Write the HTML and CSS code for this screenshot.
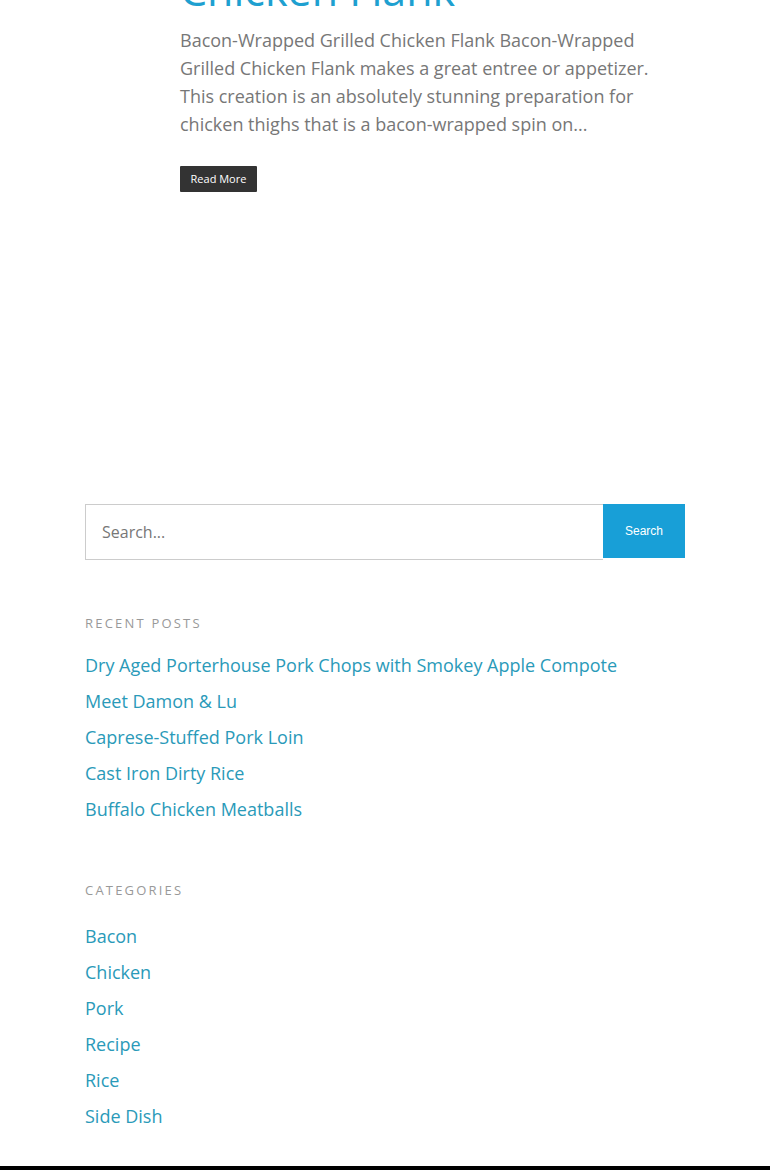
FILE: index.html
```html
<!DOCTYPE html>
<html lang="en">
<head>
<meta charset="utf-8">
<title>Bacon-Wrapped Grilled Chicken Flank</title>
<link rel="stylesheet" href="styles.css">
</head>
<body>
<div class="site">
  <div class="content">
    <article class="post">
      <h2 class="post-title"><a href="#">Chicken Flank</a></h2>
      <p class="post-excerpt">Bacon-Wrapped Grilled Chicken Flank Bacon-Wrapped Grilled Chicken Flank makes a great entree or appetizer. This creation is an absolutely stunning preparation for chicken thighs that is a bacon-wrapped spin on...</p>
      <a class="read-more" href="#">Read More</a>
    </article>

    <aside class="sidebar">
      <form class="search-form">
        <input class="search-field" type="search" placeholder="Search...">
        <button class="search-submit" type="button">Search</button>
      </form>

      <section class="widget widget-recent">
        <h3 class="widget-title">Recent Posts</h3>
        <ul class="widget-list">
          <li><a href="#">Dry Aged Porterhouse Pork Chops with Smokey Apple Compote</a></li>
          <li><a href="#">Meet Damon &amp; Lu</a></li>
          <li><a href="#">Caprese-Stuffed Pork Loin</a></li>
          <li><a href="#">Cast Iron Dirty Rice</a></li>
          <li><a href="#">Buffalo Chicken Meatballs</a></li>
        </ul>
      </section>

      <section class="widget widget-categories">
        <h3 class="widget-title">Categories</h3>
        <ul class="widget-list">
          <li><a href="#">Bacon</a></li>
          <li><a href="#">Chicken</a></li>
          <li><a href="#">Pork</a></li>
          <li><a href="#">Recipe</a></li>
          <li><a href="#">Rice</a></li>
          <li><a href="#">Side Dish</a></li>
        </ul>
      </section>
    </aside>
  </div>
  <footer class="site-footer"></footer>
</div>
</body>
</html>
```
FILE: styles.css
```css
html, body {
  margin: 0;
  padding: 0;
  background: #fff;
}
body {
  font-family: "Open Sans", "Noto Sans", sans-serif;
  color: #777;
}
.site {
  display: flow-root;
}
.content {
  width: 600px;
  margin: 0 auto;
}
.post {
  padding-left: 95px;
}
.post-title {
  margin: -36px 0 10px;
  font-size: 43px;
  line-height: 52px;
  font-weight: 400;
}
.post-title a {
  color: #1ea0d0;
  text-decoration: none;
}
.post-excerpt {
  margin: 0 0 28px;
  font-size: 18px;
  line-height: 28px;
  color: #777;
}
.read-more {
  display: inline-block;
  background: #333;
  color: #fff;
  font-size: 11px;
  line-height: 16px;
  padding: 5px 10px 5px 10px;
  min-width: 57px;
  text-align: center;
  text-decoration: none;
  border-radius: 1px;
}
.sidebar {
  margin-top: 312px;
}
.search-form {
  display: flex;
  align-items: flex-start;
}
.search-field {
  flex: 1;
  box-sizing: border-box;
  height: 56px;
  margin: 0;
  border: 1px solid #ccc;
  border-right: none;
  padding: 0 16px;
  font-family: "Open Sans", sans-serif;
  font-size: 16px;
  color: #777;
  outline: none;
  background: #fff;
}
.search-field::placeholder {
  color: #777;
}
.search-submit {
  width: 82px;
  height: 54px;
  margin: 0;
  border: none;
  background: #189fd7;
  color: #fff;
  font-family: "Liberation Sans", Arial, sans-serif;
  font-size: 12px;
  padding: 0;
}
.widget-recent {
  margin-top: 53px;
}
.widget-categories {
  margin-top: 53px;
}
.widget-title {
  margin: 0;
  font-size: 13px;
  line-height: 20px;
  font-weight: 400;
  letter-spacing: 2.2px;
  text-transform: uppercase;
  color: #999;
}
.widget-recent .widget-title {
  margin-bottom: 14px;
}
.widget-categories .widget-title {
  margin-bottom: 18px;
}
.widget-list {
  list-style: none;
  margin: 0;
  padding: 0;
}
.widget-list li {
  font-size: 18px;
  line-height: 36px;
}
.widget-list a {
  color: #2a9ab9;
  text-decoration: none;
}
.site-footer {
  margin-top: 32px;
  height: 120px;
  background: #000;
}
```
